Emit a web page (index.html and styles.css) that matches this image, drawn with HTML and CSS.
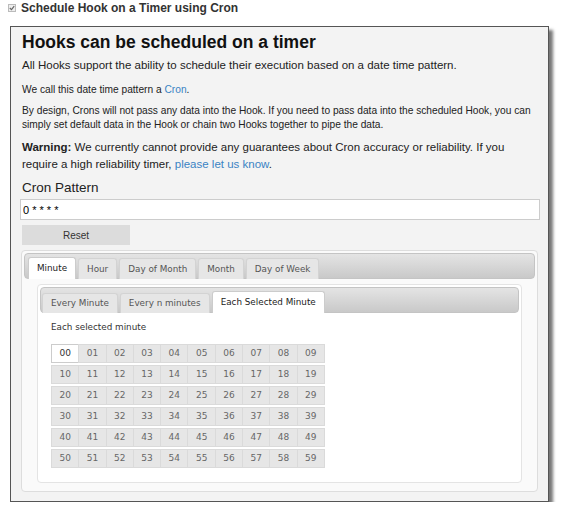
FILE: index.html
```html
<!DOCTYPE html>
<html>
	<head>
		<meta charset="utf-8">
		<title>Schedule Hook on a Timer using Cron</title>
		<link rel="stylesheet" href="styles.css">
	</head>
	<body>
		<div class="title">
			<span class="check"><svg width="6" height="6" viewBox="0 0 6 6"><path d="M0.8 3 L2.5 4.7 L5.2 1.2" fill="none" stroke="#666" stroke-width="1.2"/></svg></span>
			Schedule Hook on a Timer using Cron
		</div>

		<div class="box">
			<h1>Hooks can be scheduled on a timer</h1>
			<p class="lead first">All Hooks support the ability to schedule their execution based on a date time pattern.</p>
			<p class="small">We call this date time pattern a <a href="#">Cron</a>.</p>
			<p class="small">By design, Crons will not pass any data into the Hook. If you need to pass data into the scheduled Hook, you can simply set default data in the Hook or chain two Hooks together to pipe the data.</p>
			<p class="lead warn"><b>Warning:</b> We currently cannot provide any guarantees about Cron accuracy or reliability. If you require a high reliability timer, <a href="#">please let us know</a>.</p>

			<label class="label" for="pattern">Cron Pattern</label>
			<input type="text" id="pattern" class="pattern" value="0 * * * *" />
			<button class="reset">Reset</button>

			<!-- 外层选项卡 -->
			<div class="tabs outer">
				<ul class="tabbar">
					<li class="active">Minute</li>
					<li>Hour</li>
					<li>Day of Month</li>
					<li>Month</li>
					<li>Day of Week</li>
				</ul>
				<div class="panel">
					<!-- 内层选项卡 -->
					<div class="tabs inner">
						<ul class="tabbar">
							<li>Every Minute</li>
							<li>Every n minutes</li>
							<li class="active">Each Selected Minute</li>
						</ul>
						<div class="panel">
							<div class="hint">Each selected minute</div>
							<div class="grid" id="grid"></div>
						</div>
					</div>
				</div>
			</div>
		</div>

		<script type="text/javascript">
			// 生成 00-59 分钟格子
			var grid = document.getElementById("grid");
			for (var r = 0; r < 6; r++) {
				var row = document.createElement("div");
				row.className = "row";
				for (var c = 0; c < 10; c++) {
					var n = r * 10 + c;
					var cell = document.createElement("span");
					cell.className = n == 0 ? "cell on" : "cell";
					cell.innerText = (n < 10 ? "0" : "") + n;
					row.appendChild(cell);
				}
				grid.appendChild(row);
			}
		</script>
	</body>
</html>
```

FILE: styles.css
```css
body{
	margin: 0;
	padding: 0 0 0 8px;
	font-family: "Liberation Sans", Arial, sans-serif;
	color: #222;
	background: #fff;
}
.title{
	font-size: 12px;
	font-weight: bold;
	color: #333;
	height: 15px;
	line-height: 14px;
	display: flex;
	align-items: center;
	gap: 5px;
}
.check{
	width: 6px;
	height: 6px;
	border: 1px solid #bbb;
	background: #eee;
	display: flex;
}
.box{
	margin-top: 11px;
	width: 516px;
	border: 1px solid #555;
	background: #f3f3f3;
	padding: 2px 10px 9px 11px;
	box-shadow: 4px 4px 3px #777;
	margin-left: 2px;
}
h1{
	font-size: 17.5px;
	margin: 3px 0 5px;
	line-height: 20px;
	color: #111;
}
p{
	margin: 0;
}
.lead{
	font-size: 11.5px;
	line-height: 17px;
	margin-bottom: 6px;
}
.first{
	margin-bottom: 9px;
}
.warn{
	margin-top: 2px;
}
.small{
	font-size: 10.2px;
	line-height: 14px;
	margin-bottom: 7px;
}
a{
	color: #3a83c4;
	text-decoration: none;
}
.label{
	display: block;
	font-size: 13.5px;
	margin-top: 7px;
	line-height: 16px;
}
.pattern{
	display: block;
	width: 520px;
	margin: 3px 0 0 -2px;
	height: 21px;
	box-sizing: border-box;
	border: 1px solid #ccc;
	background: #fff;
	font-family: "Liberation Sans", Arial, sans-serif;
	font-size: 11px;
	padding: 0 2px;
}
.reset{
	display: block;
	margin: 5px 0 0 0;
	width: 108px;
	height: 20px;
	border: 0;
	background: #dcdcdc;
	font-family: "Liberation Sans", Arial, sans-serif;
	font-size: 10px;
	color: #333;
}
.tabs{
	border: 1px solid #ddd;
	border-radius: 4px;
	padding: 2px;
	background: #fafafa;
}
.outer{
	margin: 5px 0 0 -1px;
}
.tabbar{
	list-style: none;
	margin: 0;
	padding: 3px 0 0 3px;
	height: 21px;
	border: 1px solid #c4c4c4;
	border-radius: 4px;
	background: linear-gradient(#e4e4e4, #c9c9c9);
	display: flex;
	gap: 2px;
	align-items: flex-end;
}
.tabbar li{
	font-family: "DejaVu Sans", Verdana, sans-serif;
	font-size: 8.8px;
	color: #555;
	padding: 0 8px;
	height: 20px;
	line-height: 20px;
	border: 1px solid #d3d3d3;
	border-bottom: 0;
	border-radius: 3px 3px 0 0;
	background: #e6e6e6;
	margin-bottom: -1px;
}
.tabbar li.active{
	background: #fff;
	border-color: #ccc;
	color: #222;
	height: 21px;
}
.outer > .panel{
	padding: 5px 13px 6px;
}
.inner{
	background: #fff;
	border-color: #e4e4e4;
}
.inner > .panel{
	padding: 9px 11px 12px;
}
.inner .tabbar{
	padding-left: 1px;
	height: 21px;
}
.inner .tabbar li{
	height: 19px;
	line-height: 19px;
	padding: 0 8px;
}
.inner .tabbar li.active{
	height: 21px;
	line-height: 21px;
}
.hint{
	font-family: "DejaVu Sans", Verdana, sans-serif;
	font-size: 8.8px;
	color: #333;
	margin-bottom: 12px;
}
.grid{
	display: flex;
	flex-direction: column;
	gap: 2px;
}
.row{
	display: flex;
}
.cell{
	width: 26.3px;
	height: 17px;
	line-height: 17px;
	text-align: center;
	font-family: "DejaVu Sans", Verdana, sans-serif;
	font-size: 9px;
	color: #666;
	background: #e6e6e6;
	border: 1px solid #dadada;
	margin-right: -1px;
	box-sizing: content-box;
}
.cell.on{
	background: #fff;
	border-color: #ccc;
	color: #333;
}
```
